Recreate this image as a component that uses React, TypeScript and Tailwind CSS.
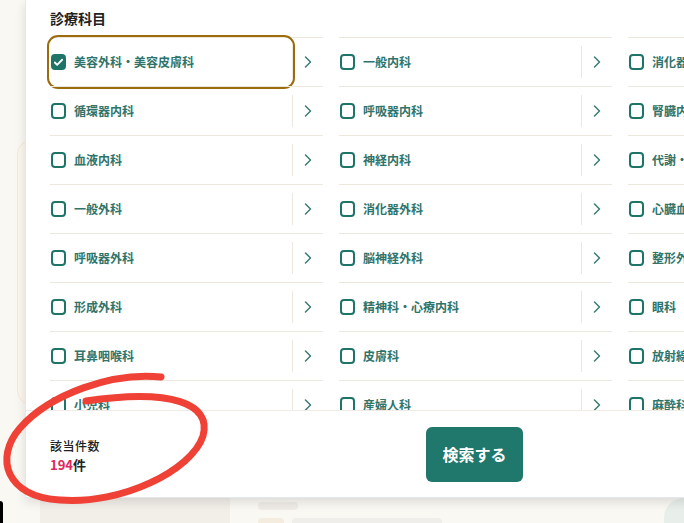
import { Check, ChevronRight } from 'lucide-react'

const rows: string[][] = [
  ['美容外科・美容皮膚科', '一般内科', '消化器内科'],
  ['循環器内科', '呼吸器内科', '腎臓内科'],
  ['血液内科', '神経内科', '代謝・内分泌内科'],
  ['一般外科', '消化器外科', '心臓血管外科'],
  ['呼吸器外科', '脳神経外科', '整形外科'],
  ['形成外科', '精神科・心療内科', '眼科'],
  ['耳鼻咽喉科', '皮膚科', '放射線科'],
  ['小児科', '産婦人科', '麻酔科'],
]

function DeptItem({ name, checked }: { name: string; checked?: boolean }) {
  return (
    <div className="flex h-[49px] border-t border-[#ede7de]">
      <label
        className={
          checked
            ? 'flex flex-1 items-center gap-2 rounded-lg pl-[1px] outline-2 outline-offset-1 outline-[#9c6c0c]'
            : 'flex flex-1 items-center gap-2 pl-[1px]'
        }
      >
        {checked ? (
          <span className="flex h-[16px] w-[15px] items-center justify-center rounded-[4px] bg-[#1f7468]">
            <Check className="h-[11px] w-[11px] text-white" strokeWidth={4} />
          </span>
        ) : (
          <span className="h-[16px] w-[15px] rounded-[4px] border-2 border-[#1f7468]" />
        )}
        <span className="text-[12px] font-bold leading-none text-[#2e746b]">{name}</span>
      </label>
      <div className="my-2 w-px bg-[#ede7de]" />
      <div className="flex w-[30px] items-center justify-center text-[#3b7d74]">
        <ChevronRight className="h-[20px] w-[20px]" strokeWidth={1.8} />
      </div>
    </div>
  )
}

export default function App() {
  return (
    <div
      className="relative h-[523px] w-[684px] overflow-hidden bg-[#faf8f3]"
      style={{ fontFamily: '"Noto Sans CJK JP", "Noto Sans", sans-serif' }}
    >
      {/* page behind the modal */}
      <div className="absolute left-[17px] top-[140px] h-[265px] w-[40px] rounded-l-[14px] border border-[#f6e9d8] bg-[#fbf6ee]" />
      <div className="absolute left-[40px] top-[498px] flex h-[30px] w-[644px] gap-3">
        <div className="h-full w-[190px] bg-[#f2efe9]" />
        <div className="flex w-[240px] flex-col gap-2 pl-4 pt-1">
          <div className="h-[8px] w-[40px] rounded bg-[#efece7]" />
          <div className="flex gap-2">
            <div className="h-[10px] w-[26px] rounded bg-[#f3ecdf]" />
            <div className="h-[10px] w-[150px] rounded bg-[#f0eeea]" />
          </div>
        </div>
        <div className="ml-auto h-full w-[20px] rounded-tl-[20px] bg-[#e8efea]" />
      </div>
      <div className="absolute bottom-0 left-0 h-[22px] w-[3px] rounded-tr bg-black" />

      {/* modal */}
      <div className="absolute left-[25px] top-0 flex h-[498px] w-[760px] flex-col border-l border-b border-[#e3e7ee] bg-white shadow-[0_4px_10px_rgba(0,0,0,0.12)]">
        <div className="h-[410px] overflow-hidden px-6">
          <h2 className="pt-[9px] text-[14px] font-bold leading-[18px] text-[#222]">診療科目</h2>
          <div className="mt-[10px] grid grid-cols-[273px_273px_273px] gap-x-4">
            {rows.map((row, i) =>
              row.map((name, j) => <DeptItem key={`${i}-${j}`} name={name} checked={i === 0 && j === 0} />)
            )}
          </div>
        </div>
        <div className="flex flex-1 items-center border-t border-[#f0ebe4] px-6">
          <div className="flex w-[376px] flex-col gap-[3px]">
            <span className="text-[12px] font-medium tracking-[0.04em] text-[#222]">該当件数</span>
            <span className="text-[13px] font-bold leading-none text-[#222]">
              <span className="text-[#e0265a]">194</span>件
            </span>
          </div>
          <button className="h-[55px] w-[97px] rounded-md bg-[#20786d] text-[16px] font-bold text-white">
            検索する
          </button>
        </div>
      </div>

      {/* hand-drawn annotation */}
      <svg className="pointer-events-none absolute left-0 top-0" width="684" height="523" viewBox="0 0 684 523">
        <path
          d="M161 377 C 112 372, 50 394, 20 428 C -6 458, 6 497, 60 500 C 122 505, 192 470, 203 436 C 212 404, 172 388, 86 401"
          fill="none"
          stroke="#ef4136"
          strokeWidth="7"
          strokeLinecap="round"
        />
      </svg>
    </div>
  )
}
